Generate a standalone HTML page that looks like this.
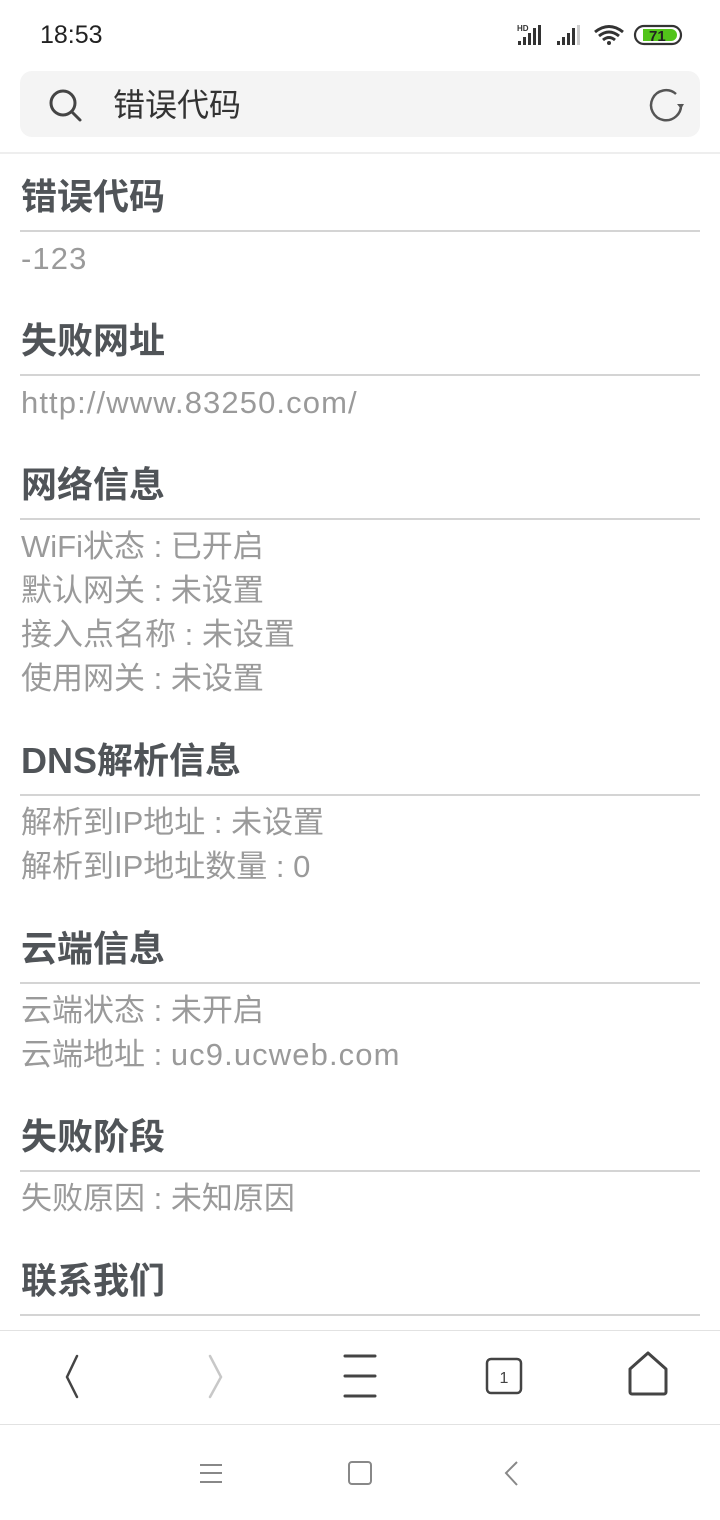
<!DOCTYPE html>
<html><head><meta charset="utf-8"><style>
*{margin:0;padding:0;box-sizing:border-box}
body{width:720px;height:1520px;background:#fff;position:relative;overflow:hidden;font-family:"Liberation Sans","Noto Sans CJK SC",sans-serif}
.a{position:absolute;white-space:nowrap}
.h{left:21px;font-size:36px;font-weight:bold;color:#505458;line-height:40px;height:40px}
.t{left:21px;font-size:31px;color:#9a9a9a;line-height:40px;height:40px}
.l{letter-spacing:1.1px}
.ln{position:absolute;left:20px;width:680px;height:2px;background:#d4d4d4}
</style></head><body>
<div class="a" style="left:40px;top:18px;font-size:25px;color:#222;line-height:34px">18:53</div>
<svg class="a" style="left:515px;top:22px" width="170" height="26" viewBox="0 0 170 26">
<text x="2" y="9" font-size="8" font-weight="bold" fill="#333" font-family="Liberation Sans">HD</text>
<rect x="3" y="19" width="3" height="4" fill="#333"/><rect x="8" y="15" width="3" height="8" fill="#333"/><rect x="13" y="11" width="3" height="12" fill="#333"/><rect x="18" y="6" width="3" height="17" fill="#333"/><rect x="23" y="3" width="3" height="20" fill="#333"/>
<rect x="42" y="19" width="3" height="4" fill="#333"/><rect x="47" y="15" width="3" height="8" fill="#333"/><rect x="52" y="11" width="3" height="12" fill="#333"/><rect x="57" y="6" width="3" height="17" fill="#333"/><rect x="62" y="3" width="3" height="20" fill="#ccc"/>
<path d="M80 10 Q94 -1 108 10" stroke="#333" stroke-width="3" fill="none"/><path d="M84 14 Q94 6 104 14" stroke="#333" stroke-width="3" fill="none"/><path d="M88 18 Q94 13 100 18" stroke="#333" stroke-width="3" fill="none"/><circle cx="94" cy="21" r="2" fill="#333"/>
<rect x="120" y="4" width="46" height="18" rx="9" fill="none" stroke="#333" stroke-width="2.2"/>
<path d="M128 7 H156 a6 6 0 0 1 0 12 H128 Z" fill="#52c41a"/>
<text x="134" y="19" font-size="15" font-weight="bold" fill="#222" font-family="Liberation Sans">71</text>
</svg>
<div class="a" style="left:20px;top:71px;width:680px;height:66px;border-radius:12px;background:#f4f4f4"></div>
<svg class="a" style="left:47px;top:87px" width="36" height="36" viewBox="0 0 36 36"><circle cx="16" cy="16" r="12" stroke="#444" stroke-width="3" fill="none"/><path d="M25 25 L33 33" stroke="#444" stroke-width="3" stroke-linecap="round"/></svg>
<div class="a" style="left:113px;top:85px;font-size:32px;color:#333;line-height:40px">错误代码</div>
<svg class="a" style="left:648px;top:87px" width="40" height="36" viewBox="0 0 40 36"><path d="M33 17 A15 15 0 1 1 28 7" stroke="#555" stroke-width="2.5" fill="none"/><path d="M29 17 L36 17 L33 22 Z" fill="#555"/></svg>
<div class="a" style="left:0;top:152px;width:720px;height:2px;background:#eee"></div>

<div class="a h" style="top:177px">错误代码</div><div class="ln" style="top:230px"></div>
<div class="a t l" style="top:239px">-123</div>
<div class="a h" style="top:321px">失败网址</div><div class="ln" style="top:374px"></div>
<div class="a t l" style="top:383px">http://www.83250.com/</div>
<div class="a h" style="top:465px">网络信息</div><div class="ln" style="top:518px"></div>
<div class="a t" style="top:527px">WiFi状态 : 已开启</div>
<div class="a t" style="top:571px">默认网关 : 未设置</div>
<div class="a t" style="top:615px">接入点名称 : 未设置</div>
<div class="a t" style="top:659px">使用网关 : 未设置</div>
<div class="a h" style="top:741px">DNS解析信息</div><div class="ln" style="top:794px"></div>
<div class="a t" style="top:803px">解析到IP地址 : 未设置</div>
<div class="a t" style="top:847px">解析到IP地址数量 : 0</div>
<div class="a h" style="top:929px">云端信息</div><div class="ln" style="top:982px"></div>
<div class="a t" style="top:991px">云端状态 : 未开启</div>
<div class="a t" style="top:1035px">云端地址 : <span class="l">uc9.ucweb.com</span></div>
<div class="a h" style="top:1117px">失败阶段</div><div class="ln" style="top:1170px"></div>
<div class="a t" style="top:1179px">失败原因 : 未知原因</div>
<div class="a h" style="top:1261px">联系我们</div><div class="ln" style="top:1314px"></div>

<div class="a" style="left:0;top:1328px;width:720px;height:192px;background:#fff"></div>
<div class="a" style="left:0;top:1330px;width:720px;height:1px;background:#e2e2e2"></div>
<svg class="a" style="left:0;top:1331px" width="720" height="92" viewBox="0 0 720 92">
<path d="M77 25 L67 46 L77 66" stroke="#444" stroke-width="2.5" fill="none" stroke-linecap="round"/>
<path d="M210 25 L221 46 L210 66" stroke="#c8c8c8" stroke-width="2.5" fill="none" stroke-linecap="round"/>
<path d="M345 25 H375 M345 45 H375 M345 65 H375" stroke="#444" stroke-width="3" stroke-linecap="round"/>
<rect x="487" y="28" width="34" height="34" rx="4" fill="none" stroke="#444" stroke-width="2.5"/>
<text x="504" y="52" font-size="16" fill="#444" text-anchor="middle" font-family="Liberation Sans">1</text>
<path d="M630 38 L648 22 L666 38 V61 a2 2 0 0 1 -2 2 H632 a2 2 0 0 1 -2 -2 Z" fill="none" stroke="#444" stroke-width="3" stroke-linejoin="round"/>
</svg>
<div class="a" style="left:0;top:1424px;width:720px;height:1px;background:#e2e2e2"></div>
<svg class="a" style="left:0;top:1425px" width="720" height="95" viewBox="0 0 720 95">
<path d="M200 40 H222 M200 48 H222 M200 57 H222" stroke="#888" stroke-width="2"/>
<rect x="349" y="37" width="22" height="22" rx="3" fill="none" stroke="#888" stroke-width="2"/>
<path d="M517 37 L506 48 L517 60" stroke="#888" stroke-width="2" fill="none"/>
</svg>
</body></html>
